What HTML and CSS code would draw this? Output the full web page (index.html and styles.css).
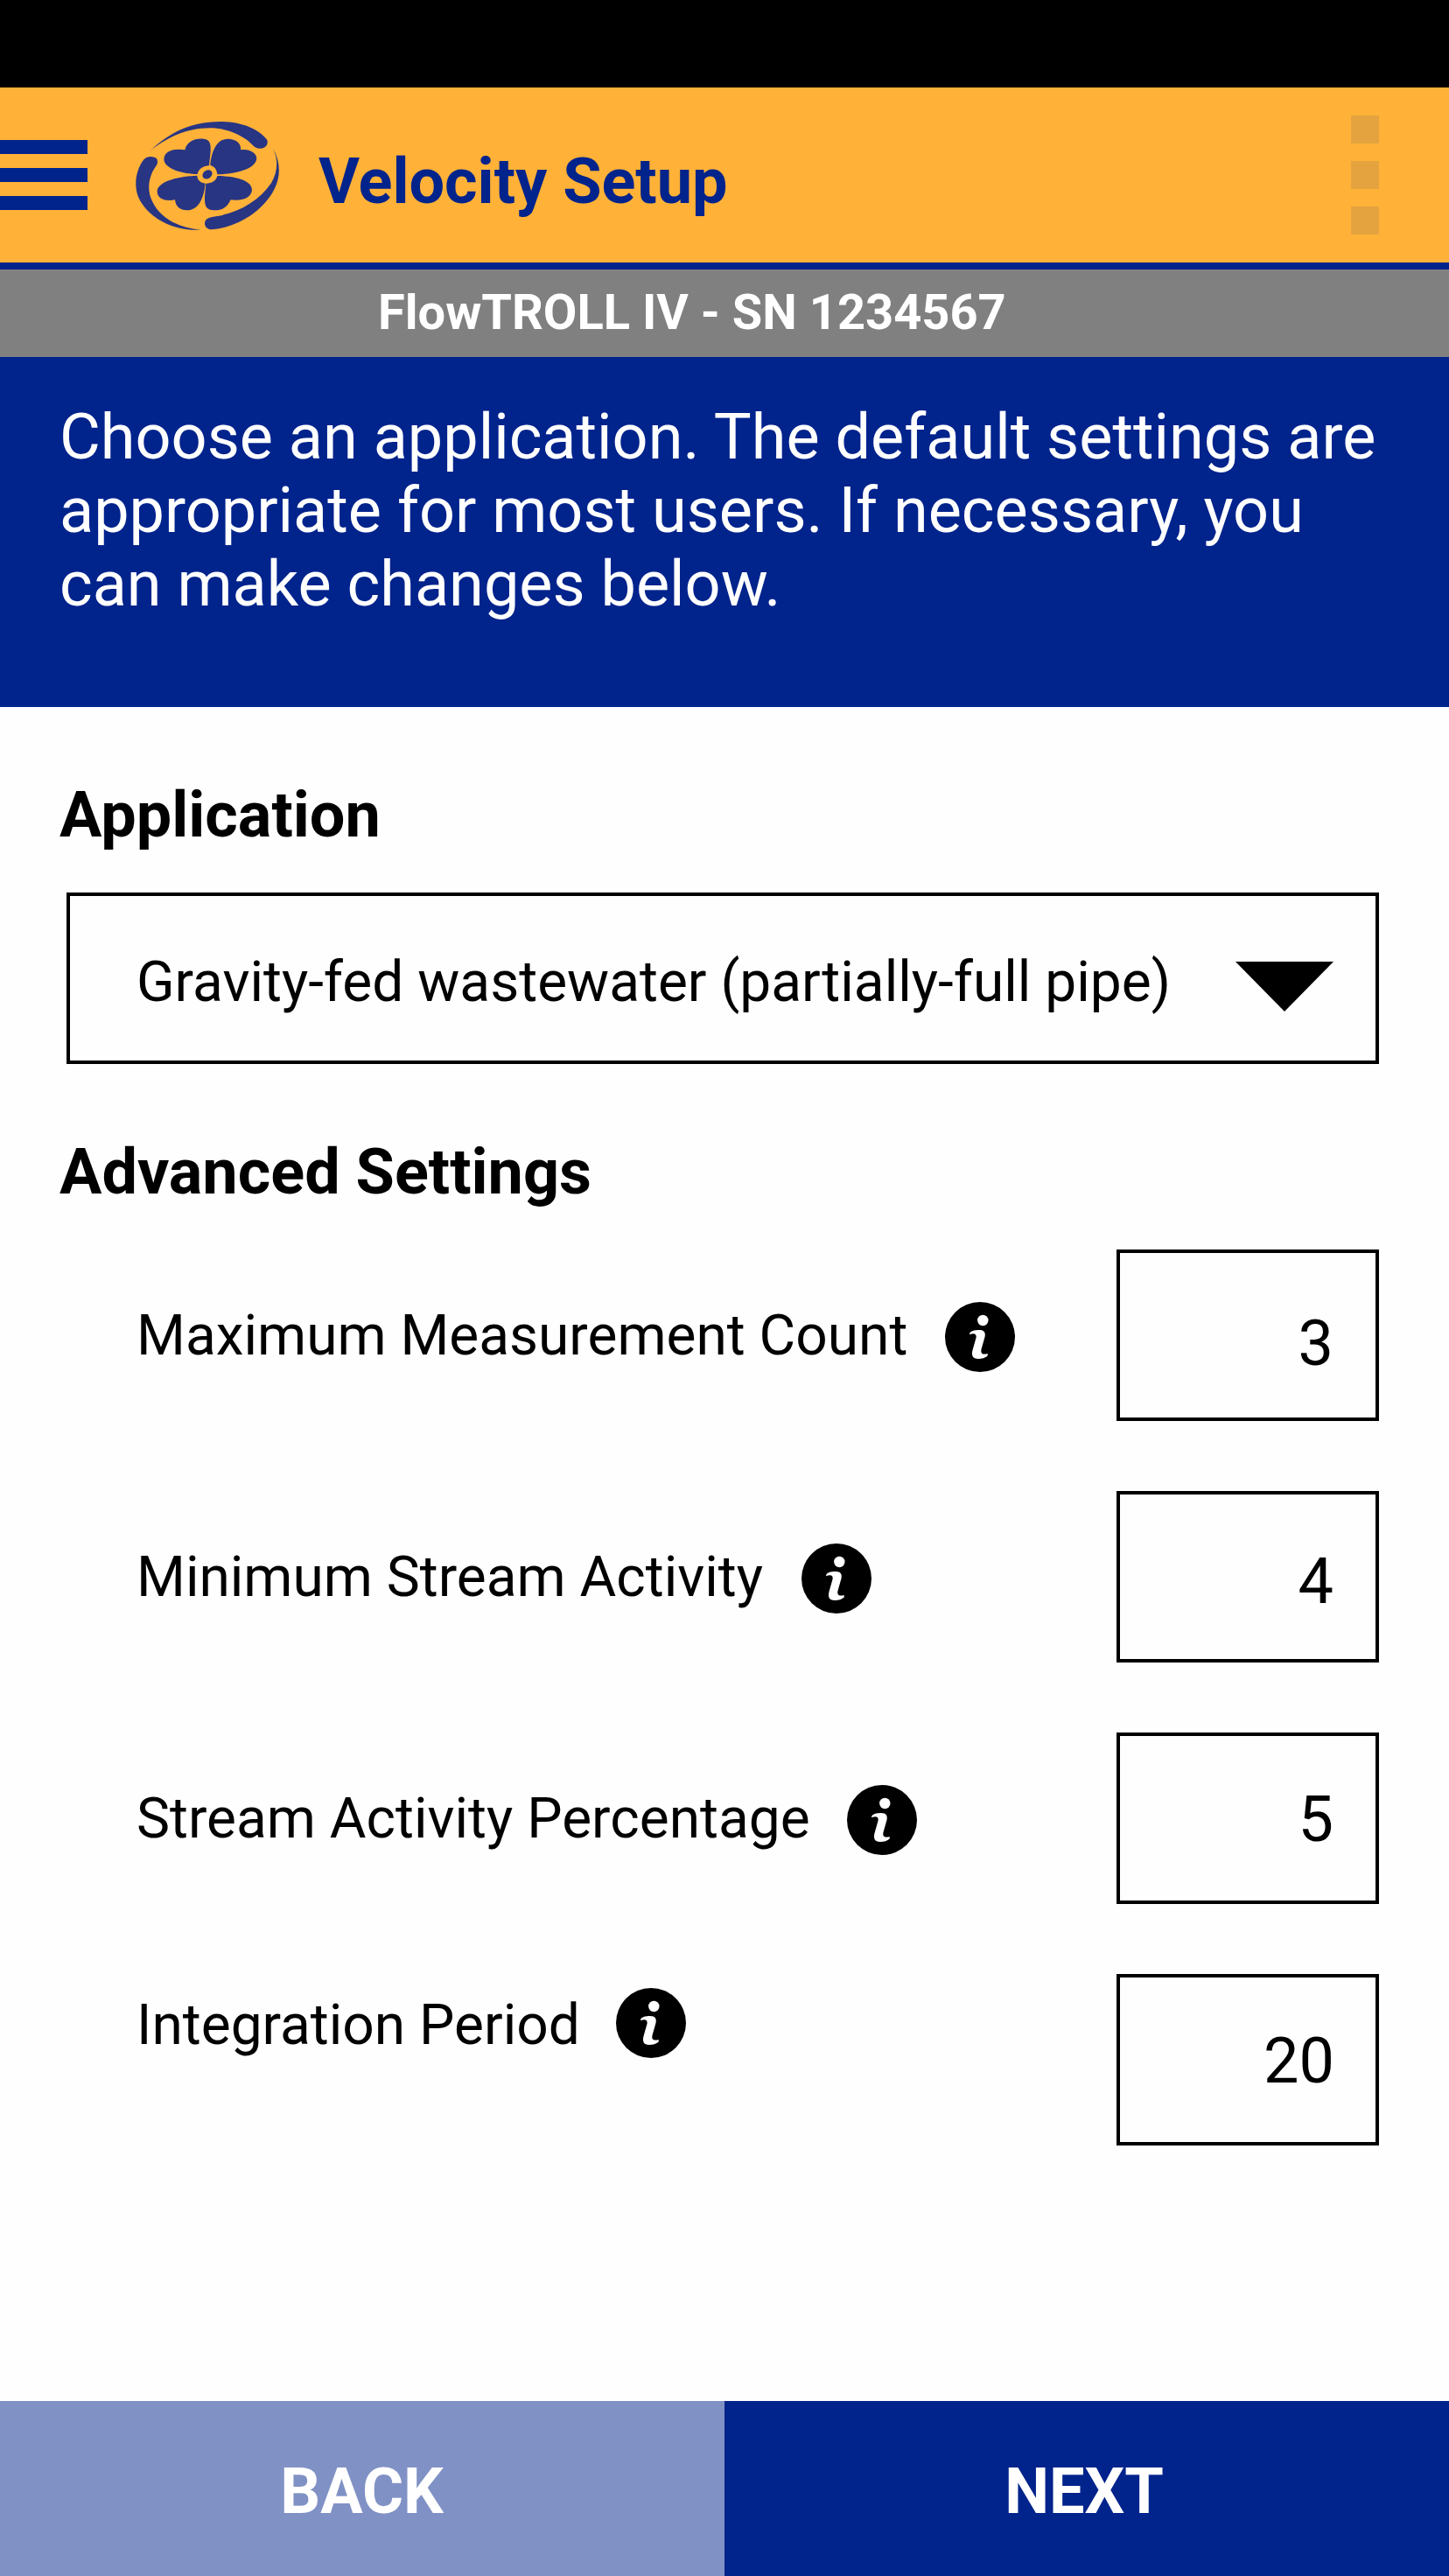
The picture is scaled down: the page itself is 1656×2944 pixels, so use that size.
FILE: index.html
```html
<!DOCTYPE html>
<html lang="en">
<head>
<meta charset="utf-8">
<title>Velocity Setup</title>
<link rel="stylesheet" href="styles.css">
</head>
<body>
<svg width="0" height="0" class="defs" aria-hidden="true">
  <symbol id="info" viewBox="0 0 80 80">
    <circle cx="40" cy="40" r="40" fill="#000"/>
    <circle cx="43.3" cy="21" r="6.2" fill="#fff"/>
    <path d="M28 37C28 33 34 32 39 32C45 32 46.500 35 45.500 40L41.500 54C40.500 59 43 60.500 48.700 59V61.500C46 64 42 65 38 65C31.500 65 30 61 31.500 55L35.500 41C36.500 36.500 33 35.500 28.500 37Z" fill="#fff"/>
  </symbol>
</svg>
<div class="screen">
  <div class="status-bar"></div>
  <header class="app-bar">
    <div class="menu"><span></span><span></span><span></span></div>
    <svg class="logo" viewBox="0 0 600 480">
      <path d="M92 160C150 105 220 57 338 57C410 57 470 84 496 120C501 139 487 150 471 149C451 148 444 133 430 122C395 96 350 79 300 79C220 79 150 112 92 160Z"/>
      <path d="M515 147C534 184 534 226 510 268C468 329 400 368 325 381C300 385 285 387 282 404C281 417 290 427 306 427C365 423 430 392 474 350C540 287 554 215 515 147Z"/>
      <path d="M268 428C170 433 85 385 54 315C37 270 48 220 72 188C86 173 107 175 117 184C124 195 119 205 110 217C90 248 82 293 103 332C132 391 195 421 268 428Z"/>
      <path d="M257 237C210 236 142 220 142 185C144 155 180 148 214 154C220 126 248 113 278 116C300 118 303 133 302 158L297 208C278 209 260 219 257 237Z"/>
      <path d="M301 207C304 170 318 117 361 116C392 116 408 134 405 154C435 150 460 164 460 184C456 222 380 238 325 238C323 220 315 210 301 207Z"/>
      <path d="M325 243C380 243 444 256 444 291C442 320 406 330 371 325C360 349 344 361 315 361C285 360 281 345 282 313L286 269C306 269 321 260 325 243Z"/>
      <path d="M256 242C200 243 120 260 119 296C119 322 147 331 180 325C182 349 198 361 221 361C267 360 280 308 284 269C268 266 257 259 256 242Z"/>
      <ellipse cx="291" cy="238" rx="18" ry="14" transform="rotate(-35 291 238)"/>
    </svg>
    <h1>Velocity Setup</h1>
    <div class="more"><span></span><span></span><span></span></div>
  </header>
  <div class="device">FlowTROLL IV - SN 1234567</div>
  <p class="intro">Choose an application. The default settings are appropriate for most users. If necessary, you can make changes below.</p>
  <main>
    <h2>Application</h2>
    <div class="select"><span>Gravity-fed wastewater (partially-full pipe)</span>
      <svg width="112" height="57" viewBox="0 0 112 57"><path d="M0 0H112L56 57Z"/></svg>
    </div>
    <h2 class="advanced">Advanced Settings</h2>
    <div class="row count"><label>Maximum Measurement Count</label><svg class="info"><use href="#info"/></svg><div class="value">3</div></div>
    <div class="row activity"><label>Minimum Stream Activity</label><svg class="info"><use href="#info"/></svg><div class="value">4</div></div>
    <div class="row percentage"><label>Stream Activity Percentage</label><svg class="info"><use href="#info"/></svg><div class="value">5</div></div>
    <div class="row period"><label>Integration Period</label><svg class="info"><use href="#info"/></svg><div class="value">20</div></div>
  </main>
  <footer><div class="back">BACK</div><div class="next">NEXT</div></footer>
</div>
</body>
</html>
```
FILE: styles.css
```css
* { box-sizing: border-box; margin: 0; }
body { font-family: Roboto, sans-serif; background: #fefefe; color: #000; }
.defs { position: absolute; }
.screen { width: 1656px; height: 2944px; display: flex; flex-direction: column; overflow: hidden; }
.status-bar { height: 100px; background: #000; }
.app-bar { height: 208px; background: #ffb138; border-bottom: 8px solid #00238c; display: flex; align-items: flex-start; }
.menu { width: 100px; padding-top: 60px; display: flex; flex-direction: column; gap: 16px; }
.menu span { height: 16px; background: #00238c; }
.logo { width: 200px; height: 160px; margin: 20px 0 0 40px; fill: #283583; }
h1 { font-size: 72px; line-height: 84px; font-weight: 700; color: #00238c; margin: 66px 0 0 24px; }
.more { margin: 32px 80px 0 auto; display: flex; flex-direction: column; gap: 20px; }
.more span { width: 32px; height: 32px; background: #e5a340; }
.device { height: 100px; background: #808080; color: #fff; font-size: 56px; line-height: 98px; font-weight: 700; padding-left: 432px; }
.intro { height: 400px; background: #00238c; color: #fff; font-size: 72px; line-height: 84px; padding: 50px 60px 0 68px; }
main { flex: 1; padding: 82px 80px 0 68px; }
h2 { font-size: 72px; line-height: 84px; font-weight: 700; }
.select { height: 196px; margin: 46px 0 0 8px; border: 4px solid #000; display: flex; align-items: center; justify-content: space-between; padding: 0 48px 0 76px; font-size: 64px; }
.select span { padding-top: 9px; }
.select svg { margin-top: 19px; }
.advanced { margin: 82px 0 46px; }
.row { height: 196px; margin-bottom: 80px; padding-left: 88px; display: flex; align-items: flex-start; }
.row label { font-size: 64px; line-height: 76px; padding-top: 61px; white-space: nowrap; }
.info { width: 80px; height: 80px; margin-top: 60px; }
.value { width: 300px; height: 196px; margin-left: auto; border: 4px solid #000; font-size: 72px; line-height: 84px; text-align: right; padding: 54px 48px 0 0; }
.count label { width: 924px; }
.count .value { padding-top: 62px; }
.activity label { width: 760px; }
.activity .value { padding-top: 58px; }
.percentage label { width: 812px; }
.period label { width: 548px; padding-top: 21px; }
.period .info { margin-top: 16px; }
.period .value { padding-right: 47px; }
footer { height: 200px; display: grid; grid-template-columns: 1fr 1fr; color: #fff; font-size: 72px; font-weight: 700; text-align: center; line-height: 208px; overflow: hidden; }
.back { background: #8091c5; padding-right: 1px; }
.next { background: #00238c; padding-right: 6px; }
```
